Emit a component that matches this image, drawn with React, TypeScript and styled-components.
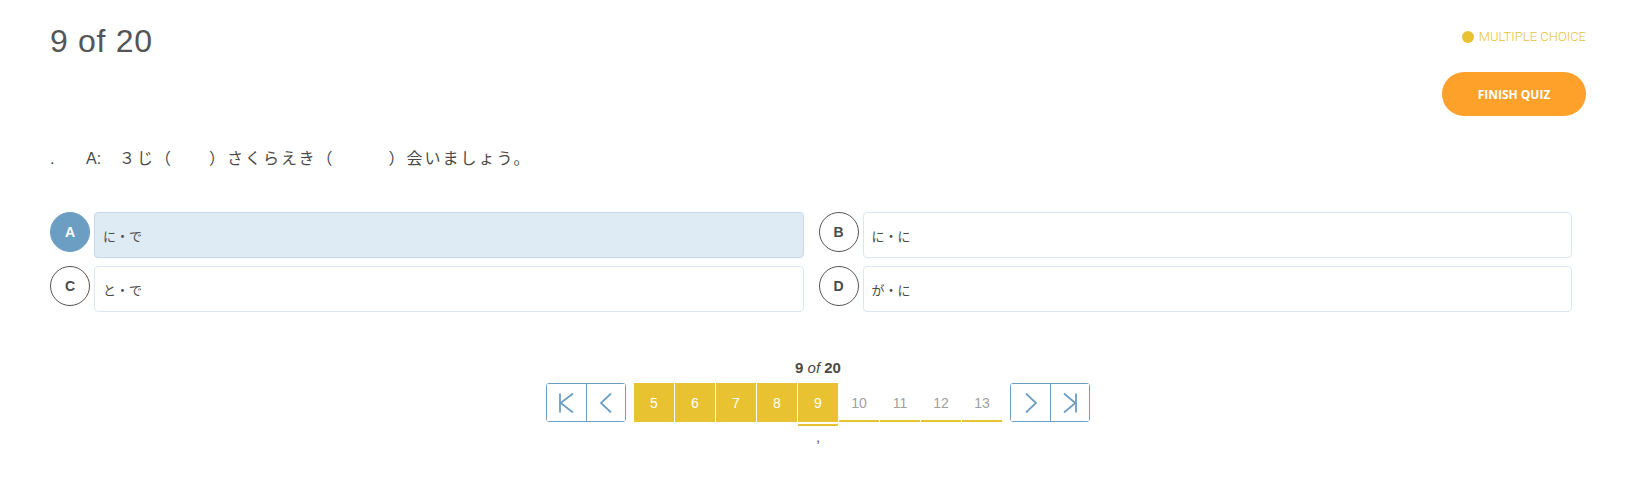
import React from "react";
import styled, { createGlobalStyle, css } from "styled-components";

const GlobalStyle = createGlobalStyle`
  html, body { margin: 0; padding: 0; background: #ffffff; }
  body { font-family: "Liberation Sans", "Noto Sans CJK JP", sans-serif; color: #555555; }
  * { box-sizing: border-box; }
`;

const YELLOW = "#E9C231";
const BLUE = "#6C9EC4";

const Page = styled.div`
  padding: 23px 49px 20px 50px;
`;

const Header = styled.header`
  display: flex;
  justify-content: space-between;
  align-items: flex-start;
`;

const Title = styled.h1`
  margin: 0;
  font-size: 32px;
  line-height: 36px;
  font-weight: 400;
  letter-spacing: 0.7px;
  color: #555555;
`;

const Side = styled.div`
  display: flex;
  flex-direction: column;
  align-items: flex-end;
`;

const TypeLabel = styled.div`
  margin-top: 6px;
  display: flex;
  align-items: center;
  gap: 5px;
  font-family: Roboto, "Liberation Sans", sans-serif;
  font-weight: 300;
  font-size: 13px;
  line-height: 16px;
  color: ${YELLOW};
`;

const Dot = styled.span`
  width: 12px;
  height: 12px;
  border-radius: 50%;
  background: ${YELLOW};
`;

const FinishButton = styled.button`
  margin-top: 27px;
  width: 144px;
  height: 44px;
  border: none;
  border-radius: 22px;
  background: #fda12b;
  color: #ffffff;
  font-family: "Open Sans", sans-serif;
  font-weight: 700;
  font-size: 12px;
  cursor: pointer;
`;

const Question = styled.p`
  margin: 31px 0 0;
  display: flex;
  align-items: baseline;
  font-size: 16px;
  line-height: 24px;
  color: #4a4a4a;
`;

const Marker = styled.span`
  width: 36px;
`;

const Speaker = styled.span`
  width: 33px;
`;

const Sentence = styled.span`
  letter-spacing: 2px;
  white-space: pre;
`;

const Options = styled.div`
  margin-top: 41px;
  display: grid;
  grid-template-columns: 1fr 1fr;
  column-gap: 15px;
  row-gap: 8px;
  padding-right: 14px;
`;

const Option = styled.div`
  display: flex;
  align-items: flex-start;
  gap: 4px;
`;

const Letter = styled.div<{ $selected?: boolean }>`
  flex: none;
  width: 40px;
  height: 40px;
  border-radius: 50%;
  display: flex;
  align-items: center;
  justify-content: center;
  font-weight: 700;
  font-size: 14px;
  ${(p) =>
    p.$selected
      ? css`
          background: ${BLUE};
          color: #ffffff;
          border: 1px solid ${BLUE};
        `
      : css`
          background: #ffffff;
          color: #4a4a4a;
          border: 1px solid #555555;
        `}
`;

const AnswerBox = styled.div<{ $selected?: boolean }>`
  flex: 1;
  height: 46px;
  display: flex;
  align-items: center;
  padding-left: 8px;
  border-radius: 4px;
  font-size: 13px;
  color: #4a4a4a;
  border: 1px solid ${(p) => (p.$selected ? "#c6d9ea" : "#dae6f1")};
  background: ${(p) => (p.$selected ? "#deeaf4" : "#ffffff")};
`;

const PagerSection = styled.div`
  margin-top: 47px;
  display: flex;
  flex-direction: column;
  align-items: center;
`;

const PagerLabel = styled.div`
  font-size: 15px;
  line-height: 18px;
  font-weight: 700;
  color: #4a4a4a;
  em { font-weight: 400; }
`;

const PagerRow = styled.div`
  margin-top: 6px;
  display: flex;
  align-items: flex-start;
  gap: 8px;
`;

const NavGroup = styled.div`
  display: flex;
  border: 1px solid ${BLUE};
  border-radius: 3px;
`;

const NavButton = styled.button`
  width: 39px;
  height: 37px;
  padding: 0;
  display: flex;
  align-items: center;
  justify-content: center;
  background: #ffffff;
  border: none;
  color: ${BLUE};
  cursor: pointer;
  & + & { border-left: 1px solid ${BLUE}; }
`;

const Pages = styled.div`
  display: flex;
  gap: 1px;
`;

const PageItem = styled.div<{ $done?: boolean; $active?: boolean }>`
  width: 40px;
  height: 39px;
  display: flex;
  align-items: center;
  justify-content: center;
  font-size: 14px;
  ${(p) =>
    p.$done
      ? css`
          background: ${YELLOW};
          color: #ffffff;
        `
      : css`
          color: #a0a0a0;
          border-bottom: 2px solid ${YELLOW};
          padding-top: 2px;
        `}
  ${(p) =>
    p.$active &&
    css`
      box-shadow: 0 2px 0 #ffffff, 0 4px 0 ${YELLOW};
    `}
`;

const Trailing = styled.div`
  margin-top: 6px;
  font-size: 15px;
  line-height: 18px;
  color: #555555;
`;

const FirstIcon = () => (
  <svg width="15" height="20" viewBox="0 0 15 20" fill="none" stroke="currentColor" strokeWidth="1.8">
    <line x1="1" y1="0.5" x2="1" y2="19.5" />
    <polyline points="14,0.5 1.6,10 14,19.5" />
  </svg>
);
const PrevIcon = () => (
  <svg width="12" height="20" viewBox="0 0 12 20" fill="none" stroke="currentColor" strokeWidth="1.8">
    <polyline points="11,0.5 1,10 11,19.5" />
  </svg>
);
const NextIcon = () => (
  <svg width="12" height="20" viewBox="0 0 12 20" fill="none" stroke="currentColor" strokeWidth="1.8">
    <polyline points="1,0.5 11,10 1,19.5" />
  </svg>
);
const LastIcon = () => (
  <svg width="14" height="20" viewBox="0 0 14 20" fill="none" stroke="currentColor" strokeWidth="1.8">
    <line x1="13" y1="0.5" x2="13" y2="19.5" />
    <polyline points="1,0.5 12.4,10 1,19.5" />
  </svg>
);

const options = [
  { key: "A", text: "に・で", selected: true },
  { key: "B", text: "に・に" },
  { key: "C", text: "と・で" },
  { key: "D", text: "が・に" },
];

const pages = [5, 6, 7, 8, 9, 10, 11, 12, 13];

export default function App() {
  return (
    <>
      <GlobalStyle />
      <Page>
        <Header>
          <Title>9 of 20</Title>
          <Side>
            <TypeLabel>
              <Dot />
              MULTIPLE CHOICE
            </TypeLabel>
            <FinishButton>FINISH QUIZ</FinishButton>
          </Side>
        </Header>
        <Question>
          <Marker>.</Marker>
          <Speaker>A:</Speaker>
          <Sentence>{"３じ（　　）さくらえき（　　　）会いましょう。"}</Sentence>
        </Question>
        <Options>
          {options.map((o) => (
            <Option key={o.key}>
              <Letter $selected={o.selected}>{o.key}</Letter>
              <AnswerBox $selected={o.selected}>{o.text}</AnswerBox>
            </Option>
          ))}
        </Options>
        <PagerSection>
          <PagerLabel>
            9 <em>of</em> 20
          </PagerLabel>
          <PagerRow>
            <NavGroup>
              <NavButton aria-label="First"><FirstIcon /></NavButton>
              <NavButton aria-label="Previous"><PrevIcon /></NavButton>
            </NavGroup>
            <Pages>
              {pages.map((n) => (
                <PageItem key={n} $done={n <= 9} $active={n === 9}>
                  {n}
                </PageItem>
              ))}
            </Pages>
            <NavGroup>
              <NavButton aria-label="Next"><NextIcon /></NavButton>
              <NavButton aria-label="Last"><LastIcon /></NavButton>
            </NavGroup>
          </PagerRow>
          <Trailing>,</Trailing>
        </PagerSection>
      </Page>
    </>
  );
}
